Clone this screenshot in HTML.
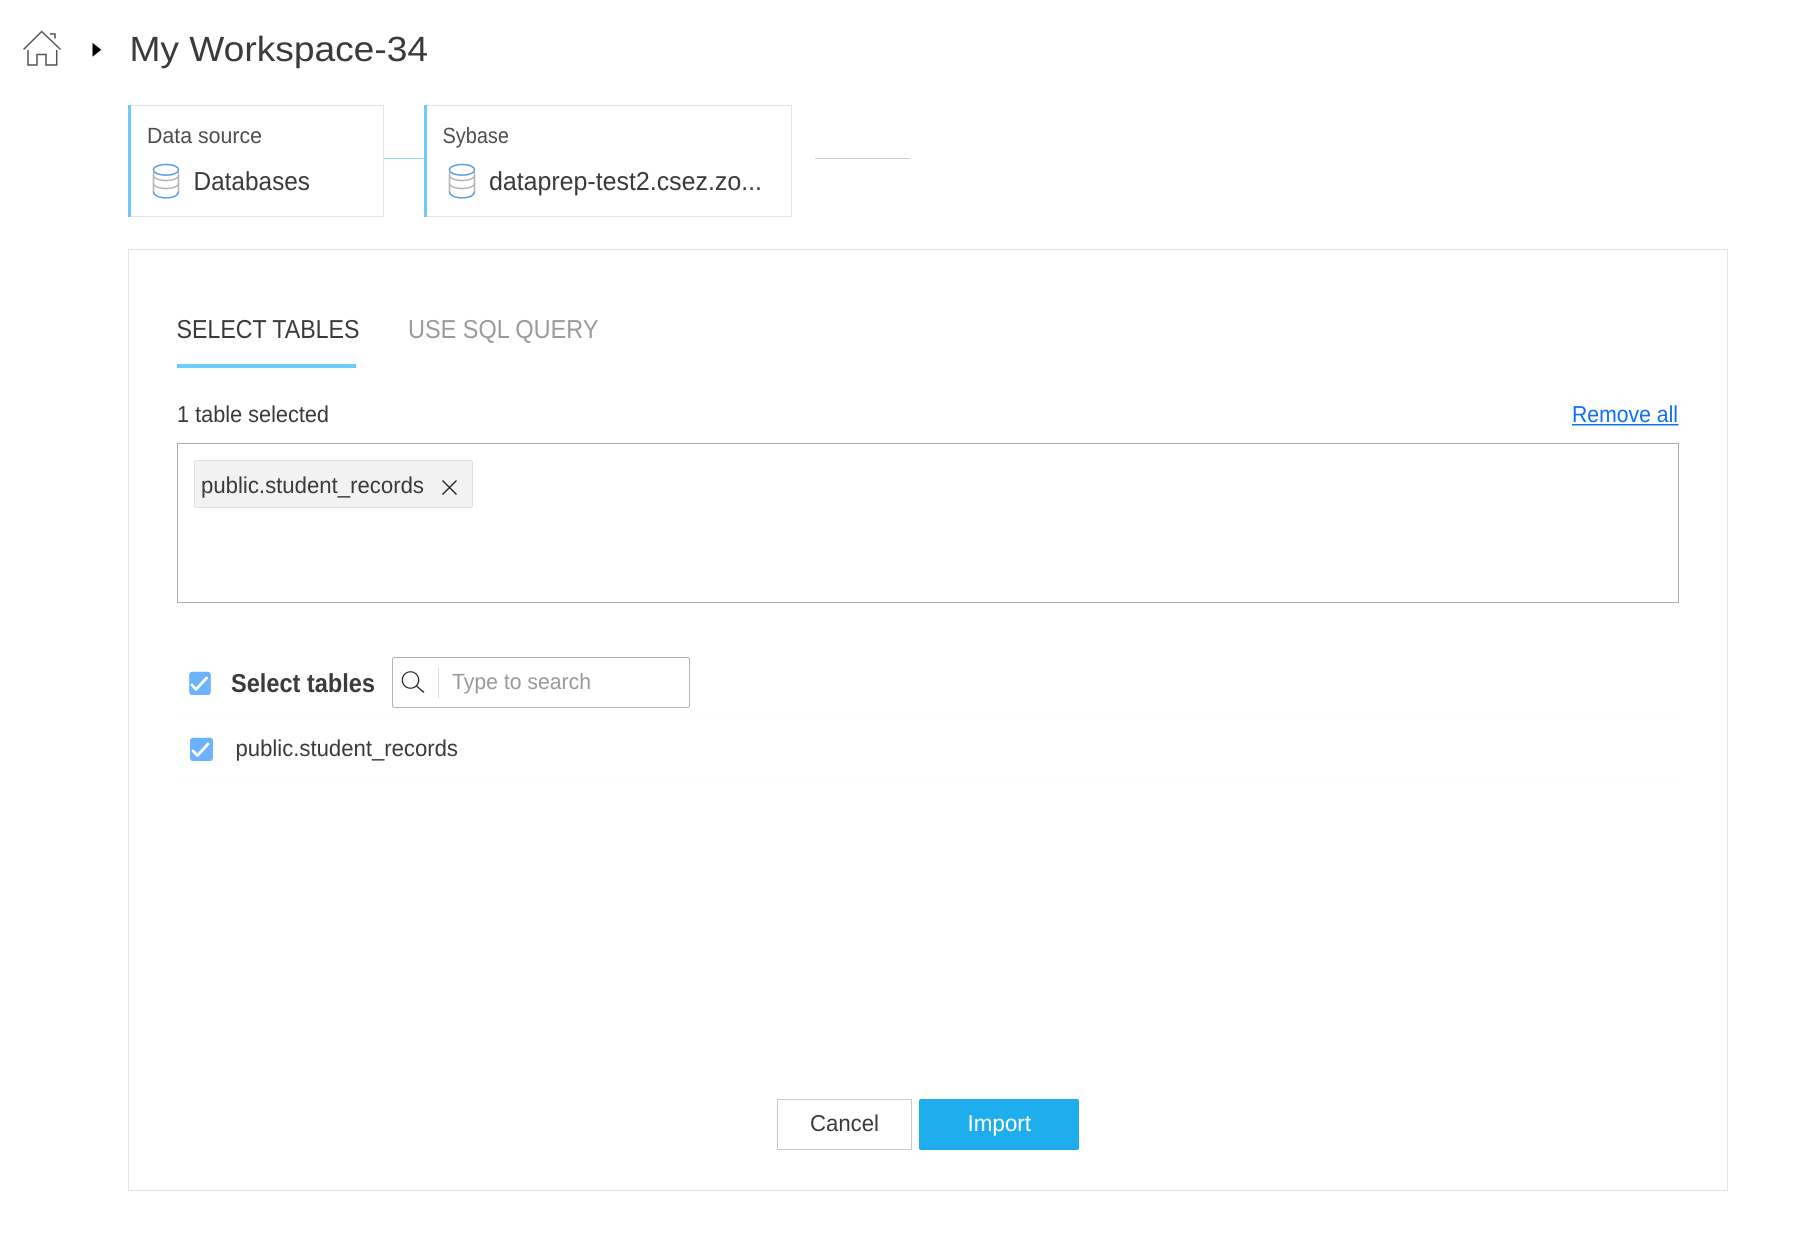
<!DOCTYPE html>
<html lang="en">
<head>
<meta charset="utf-8">
<title>My Workspace-34</title>
<style>
html,body{margin:0;padding:0;background:#fff;width:1810px;height:1254px;overflow:hidden}
svg{display:block}
text{font-family:"Liberation Sans",sans-serif;fill:#3b3b3b;text-rendering:geometricPrecision}
</style>
</head>
<body>
<svg xmlns="http://www.w3.org/2000/svg" width="1810" height="1254" viewBox="0 0 1810 1254">
<defs>
<g id="db" fill="none" stroke-width="1.500">
  <path d="M153.500 172V192M178.500 172V192" stroke="#b5b5b5"/>
  <path d="M153.500 175c0 3.500 5.500 5.500 12.500 5.500s12.500-2 12.500-5.500" stroke="#b5b5b5"/>
  <path d="M153.500 183c0 3.500 5.500 5.500 12.500 5.500s12.500-2 12.500-5.500" stroke="#b5b5b5"/>
  <ellipse cx="166" cy="169.800" rx="12.500" ry="5.300" stroke="#5b9be3"/>
  <path d="M153.500 191.500c0 4 5.500 6.300 12.500 6.300s12.500-2.300 12.500-6.300" stroke="#5b9be3"/>
</g>
</defs>

<!-- breadcrumb -->
<g fill="none" stroke="#555" stroke-width="1.500">
  <path d="M23.500 49.500L41.700 31.500L60.500 49.500"/>
  <path d="M50 34H55V38.500"/>
  <path d="M28 50V65H37V54.500H46V65H56.700V50"/>
</g>
<path d="M92.500 42.700L101.300 49.700L92.500 56.700Z" fill="#000"/>
<text x="129.500" y="61" font-size="35" textLength="298.500" lengthAdjust="spacingAndGlyphs">My Workspace-34</text>

<!-- step cards -->
<rect x="128.500" y="105.500" width="255" height="111" fill="#fff" stroke="#e4e4e4"/>
<rect x="128" y="105" width="3" height="112" fill="#6ccbfb"/>
<rect x="424.500" y="105.500" width="367" height="111" fill="#fff" stroke="#e4e4e4"/>
<rect x="424" y="105" width="3" height="112" fill="#6ccbfb"/>
<rect x="384" y="158" width="40" height="1" fill="#9fdcfb"/>
<rect x="815" y="158" width="95" height="1" fill="#cfcfcf"/>

<text x="147" y="143" font-size="22" textLength="115" lengthAdjust="spacingAndGlyphs" style="fill:#4f4f4f">Data source</text>
<text x="442.500" y="143" font-size="22" textLength="66.500" lengthAdjust="spacingAndGlyphs" style="fill:#4f4f4f">Sybase</text>
<use href="#db"/>
<use href="#db" x="296"/>
<text x="193.500" y="190" font-size="26" textLength="116.500" lengthAdjust="spacingAndGlyphs">Databases</text>
<text x="489" y="190" font-size="26" textLength="273" lengthAdjust="spacingAndGlyphs">dataprep-test2.csez.zo...</text>

<!-- main panel -->
<rect x="128.500" y="249.500" width="1599" height="941" fill="#fff" stroke="#e4e4e4"/>

<text x="176.500" y="338" font-size="26" textLength="183" lengthAdjust="spacingAndGlyphs">SELECT TABLES</text>
<text x="408" y="338" font-size="26" textLength="190.500" lengthAdjust="spacingAndGlyphs" style="fill:#9b9b9b">USE SQL QUERY</text>
<rect x="177" y="364" width="179" height="4" fill="#6ccffb"/>

<text x="177" y="422" font-size="23" textLength="152" lengthAdjust="spacingAndGlyphs">1 table selected</text>
<text x="1572" y="422" font-size="23" textLength="106" lengthAdjust="spacingAndGlyphs" style="fill:#0f6ffb">Remove all</text>
<rect x="1572" y="424" width="106.500" height="1.500" fill="#0f6ffb"/>

<rect x="177.500" y="443.500" width="1501" height="159" fill="#fff" stroke="#ababab"/>

<rect x="194.500" y="460.500" width="278" height="47" rx="2" fill="#f2f2f2" stroke="#e2e2e2"/>
<text x="201" y="493" font-size="23" textLength="223" lengthAdjust="spacingAndGlyphs">public.student_records</text>
<path d="M442.500 480.500L456.500 494.500M456.500 480.500L442.500 494.500" stroke="#222" stroke-width="1.300" fill="none"/>

<!-- select tables row -->
<rect x="189.200" y="671.800" width="21.600" height="23.200" rx="3" fill="#6bb2ff"/>
<path d="M192 685L196 689.500L206.500 678" fill="none" stroke="#fff" stroke-width="2.800" stroke-linecap="round" stroke-linejoin="round"/>
<text x="231" y="692" font-size="26" font-weight="700" textLength="144" lengthAdjust="spacingAndGlyphs">Select tables</text>

<rect x="392.500" y="657.500" width="297" height="50" rx="2" fill="#fff" stroke="#b3b3b3"/>
<circle cx="410.500" cy="680" r="8.200" fill="none" stroke="#222" stroke-width="1.200"/>
<path d="M416.500 686L424 692.500" stroke="#222" stroke-width="1.300" fill="none"/>
<rect x="438" y="668" width="1" height="30" fill="#dcdcdc"/>
<text x="452" y="689" font-size="22" textLength="139" lengthAdjust="spacingAndGlyphs" style="fill:#9a9a9a">Type to search</text>

<path d="M178 714.500H1678" stroke="#f9f9f9" stroke-dasharray="2 2" fill="none"/>

<rect x="190" y="737.800" width="23" height="23.200" rx="3" fill="#6bb2ff"/>
<path d="M193 751L197.500 755.500L208 744" fill="none" stroke="#fff" stroke-width="2.800" stroke-linecap="round" stroke-linejoin="round"/>
<text x="235.500" y="756" font-size="23" textLength="222.500" lengthAdjust="spacingAndGlyphs">public.student_records</text>

<path d="M178 779.500H1678" stroke="#f9f9f9" stroke-dasharray="2 2" fill="none"/>

<!-- buttons -->
<rect x="777.500" y="1099.500" width="134" height="50" fill="#fff" stroke="#cacaca"/>
<text x="810" y="1131" font-size="23" textLength="69" lengthAdjust="spacingAndGlyphs">Cancel</text>
<rect x="919" y="1099" width="160" height="51" rx="2" fill="#1eaeee"/>
<text x="967.500" y="1131" font-size="23" textLength="63.500" lengthAdjust="spacingAndGlyphs" style="fill:#fff">Import</text>
</svg>
</body>
</html>
